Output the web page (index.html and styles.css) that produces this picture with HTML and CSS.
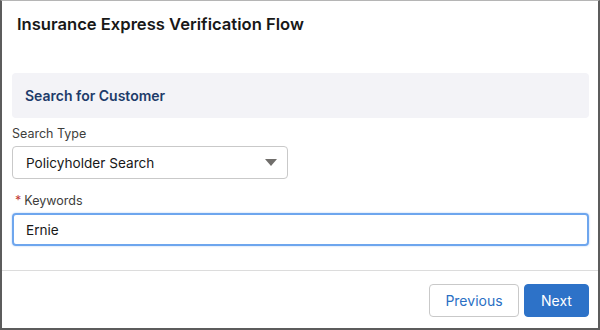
FILE: index.html
```html
<!DOCTYPE html>
<html>
<head>
    <link rel="stylesheet" href="styles.css">
</head>
<body>
    <div class="frame">
        <div class="flow-header">
            <h1 class="flow-title">Insurance Express Verification Flow</h1>
        </div>
        <div class="flow-body">
            <div class="section">
                <span class="section-title">Search for Customer</span>
            </div>
            <div class="field field-select">
                <label class="field-label" for="search-type">Search Type</label>
                <div class="select">
                    <span class="select-value" id="search-type">Policyholder Search</span>
                    <span class="select-arrow"></span>
                </div>
            </div>
            <div class="field">
                <label class="field-label" for="keywords"><abbr class="required">*</abbr>Keywords</label>
                <div class="text-input" id="keywords">Ernie</div>
            </div>
        </div>
        <div class="flow-footer">
            <button type="button" class="btn btn-neutral">Previous</button>
            <button type="button" class="btn btn-brand">Next</button>
        </div>
    </div>
</body>
</html>
```

FILE: styles.css
```css
html, body {
    margin: 0;
    padding: 0;
    background: #fff;
}

body {
    font-family: Inter, "Liberation Sans", Arial, sans-serif;
    color: #181818;
}

.frame {
    width: 600px;
    height: 330px;
    box-sizing: border-box;
    border: 2px solid #5c5c5c;
    border-top: 1px solid #b5b5b5;
    display: flex;
    flex-direction: column;
}

.flow-header {
    padding: 13px 0 0 15px;
    height: 58px;
    box-sizing: border-box;
}

.flow-title {
    margin: 0;
    font-size: 16.6px;
    font-weight: 600;
    line-height: 20px;
    color: #181818;
}

.flow-body {
    padding: 14px 9px 0 10px;
    height: 212px;
    box-sizing: border-box;
    border-bottom: 1px solid #dcdcdc;
}

.section {
    background: #f3f3f7;
    border-radius: 4px;
    height: 45px;
    display: flex;
    align-items: center;
    padding-left: 13px;
    margin-bottom: 6px;
}

.section-title {
    font-size: 14px;
    font-weight: 600;
    color: #1d3b6a;
}

.field {
    display: flex;
    flex-direction: column;
}

.field-select {
    margin-bottom: 12px;
}

.field-label {
    font-size: 12.5px;
    color: #3e3e3c;
    line-height: 20px;
    margin-bottom: 2px;
}

.required {
    color: #c23934;
    text-decoration: none;
    margin: 0 3px 0 3px;
}

.select {
    width: 276px;
    height: 33px;
    box-sizing: border-box;
    border: 1px solid #c9c9c9;
    border-radius: 4px;
    display: flex;
    align-items: center;
    justify-content: space-between;
    padding: 0 10px 0 13px;
}

.select-value,
.text-input {
    font-size: 13.6px;
    color: #181818;
}

.select-arrow {
    width: 0;
    height: 0;
    border-left: 6px solid transparent;
    border-right: 6px solid transparent;
    border-top: 7px solid #706e6b;
}

.text-input {
    height: 33px;
    box-sizing: border-box;
    border: 2px solid #6ea6ee;
    border-radius: 4px;
    box-shadow: 0 0 2px #a9c8f3;
    display: flex;
    align-items: center;
    padding-left: 12px;
}

.flow-footer {
    display: flex;
    justify-content: flex-end;
    gap: 5px;
    padding: 13px 9px 0 0;
}

.btn {
    font-family: inherit;
    font-size: 14px;
    height: 33px;
    border-radius: 4px;
    padding: 0;
    cursor: pointer;
}

.btn-neutral {
    width: 90px;
    background: #fff;
    border: 1px solid #c9c9c9;
    color: #2a6fc4;
}

.btn-brand {
    width: 65px;
    background: #2d72c8;
    border: 1px solid #2d72c8;
    color: #fff;
}
```
